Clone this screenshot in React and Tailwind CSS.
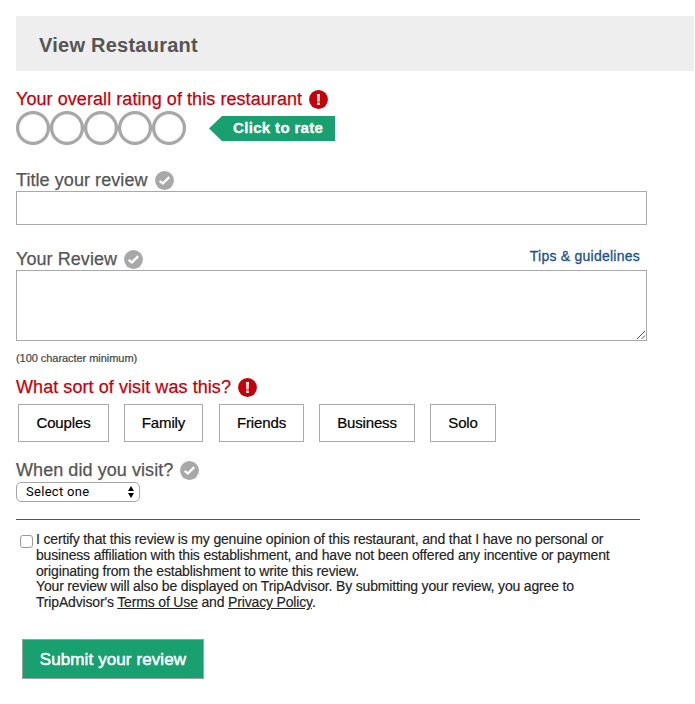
const CheckBadge = () => (
  <svg className="size-[19px] shrink-0" viewBox="0 0 19 19">
    <circle cx="9.5" cy="9.5" r="9.4" fill="#a8a8a8" />
    <path d="M4.6 9.8 L7.9 12.5 L14.2 6.1" fill="none" stroke="#fff" strokeWidth="2.3" />
  </svg>
);

const AlertBadge = () => (
  <svg className="size-[19px] shrink-0" viewBox="0 0 19 19">
    <circle cx="9.5" cy="9.5" r="9.4" fill="#c4000b" />
    <path d="M8 4 h3 l-.4 7.4 h-2.2 z M8.2 12.5 h2.6 v2.4 h-2.6 z" fill="#fff" />
    <path d="M9.1 5 h.8 l-.1 5.4 h-.6 z" fill="#c4000b" opacity=".3" />
  </svg>
);

const Ring = () => (
  <svg className="size-[34px] shrink-0" viewBox="0 0 34 34">
    <circle cx="17" cy="17" r="15.4" fill="#fff" stroke="#a8a8a8" strokeWidth="3.3" />
  </svg>
);

function Heading({ children, error }) {
  return (
    <h2 className={`flex h-[22px] items-center gap-[7px] text-lg leading-[22px] tracking-[0.07px] whitespace-nowrap [-webkit-text-stroke:0.25px_currentColor] ${error ? "text-[#c4000b]" : "text-[#555]"}`}>
      <span>{children}</span>
      {error ? <AlertBadge /> : <CheckBadge />}
    </h2>
  );
}

const visits = [
  ["Couples", "w-[91px]"],
  ["Family", "w-[79px] ml-[15px]"],
  ["Friends", "w-[85px] ml-4"],
  ["Business", "w-[96px] ml-[15px]"],
  ["Solo", "w-[66px] ml-[15px]"],
];

export default function App() {
  return (
    <main className="h-[704px] w-[695px] bg-white pt-4 pl-4 font-['Liberation_Sans',Arial,sans-serif]">
      <header className="mb-[17px] flex h-[55px] w-[678px] items-center bg-[#eee] pl-[23px]">
        <h1 className="pt-[2px] text-xl leading-6 font-bold tracking-[0.25px] text-[#555]">View Restaurant</h1>
      </header>

      <Heading error>Your overall rating of this restaurant</Heading>
      <div className="mt-px flex h-[34px] items-center">
        {[1, 2, 3, 4, 5].map((n) => (
          <Ring key={n} />
        ))}
        <div className="ml-[23px] flex h-[25px] items-center">
          <svg className="h-[25px] w-[13px]" viewBox="0 0 13 25">
            <path d="M13 0 L0 12.5 L13 25 Z" fill="#18a070" />
          </svg>
          <span className="flex h-[25px] w-[113px] items-center bg-[#18a070] pl-[11px] text-[15px] font-bold tracking-[0.34px] whitespace-nowrap text-white [-webkit-text-stroke:0.3px_currentColor]">Click to rate</span>
        </div>
      </div>

      <div className="mt-6">
        <Heading>Title your review</Heading>
        <input className="block h-[34px] w-[631px] border border-[#a9a9a9] outline-none" />
      </div>

      <div className="mt-[23px]">
        <div className="flex w-[624px] justify-between">
          <Heading>Your Review</Heading>
          <a className="text-sm leading-[17px] tracking-[0.24px] text-[#1c4f8c] [-webkit-text-stroke:0.3px_currentColor]">Tips &amp; guidelines</a>
        </div>
        <div className="flex h-[71px] w-[631px] items-end justify-end border border-[#a9a9a9]">
          <svg className="size-[10px]" viewBox="0 0 10 10">
            <path d="M1 9 L9 1 M5.5 9 L9 5.5" stroke="#555" strokeWidth="1" />
          </svg>
        </div>
      </div>
      <p className="mt-[10px] text-[11px] leading-[14px] tracking-[-0.05px] text-[#444] [-webkit-text-stroke:0.2px_currentColor]">(100 character minimum)</p>

      <div className="mt-[11px]">
        <Heading error>What sort of visit was this?</Heading>
      </div>
      <div className="mt-[6px] ml-[2px] flex">
        {visits.map(([name, width]) => (
          <button key={name} className={`h-[38px] border border-[#a9a9a9] text-[15px] tracking-[-0.15px] text-black [-webkit-text-stroke:0.2px_currentColor] ${width}`}>{name}</button>
        ))}
      </div>

      <div className="mt-[17px]">
        <Heading>When did you visit?</Heading>
      </div>
      <div className="mt-px flex h-5 w-[124px] items-center justify-between rounded-[5px] border border-[#a6a6a6] pr-[5px] pl-[9px]">
        <span className="font-['Roboto',sans-serif] text-[13px] tracking-[0.3px] text-black">Select one</span>
        <svg className="h-3 w-[6px]" viewBox="0 0 6 12">
          <path d="M0 5 L3 0 L6 5 Z M0 7 L3 12 L6 7 Z" fill="#000" />
        </svg>
      </div>

      <hr className="mt-[17px] w-[624px] border-[#555]" />

      <div className="mt-3 flex pl-[4px]">
        <span className="mt-[3px] size-[13px] shrink-0 rounded-[3px] border border-[#9a9a9a]" />
        <p className="ml-[3px] text-[14px] leading-[15.8px] tracking-[-0.165px] whitespace-nowrap text-[#222] [-webkit-text-stroke:0.15px_currentColor]">
          I certify that this review is my genuine opinion of this restaurant, and that I have no personal or<br />
          business affiliation with this establishment, and have not been offered any incentive or payment<br />
          originating from the establishment to write this review.<br />
          Your review will also be displayed on TripAdvisor. By submitting your review, you agree to<br />
          TripAdvisor's <a className="underline">Terms of Use</a> and <a className="underline">Privacy Policy</a>.
        </p>
      </div>

      <button className="mt-7 ml-[6px] block h-10 w-[182px] border border-[#a0a0a0] bg-[#18a070] pt-px text-[17px] tracking-[0.1px] text-white [-webkit-text-stroke:0.5px_currentColor]">Submit your review</button>
    </main>
  );
}
